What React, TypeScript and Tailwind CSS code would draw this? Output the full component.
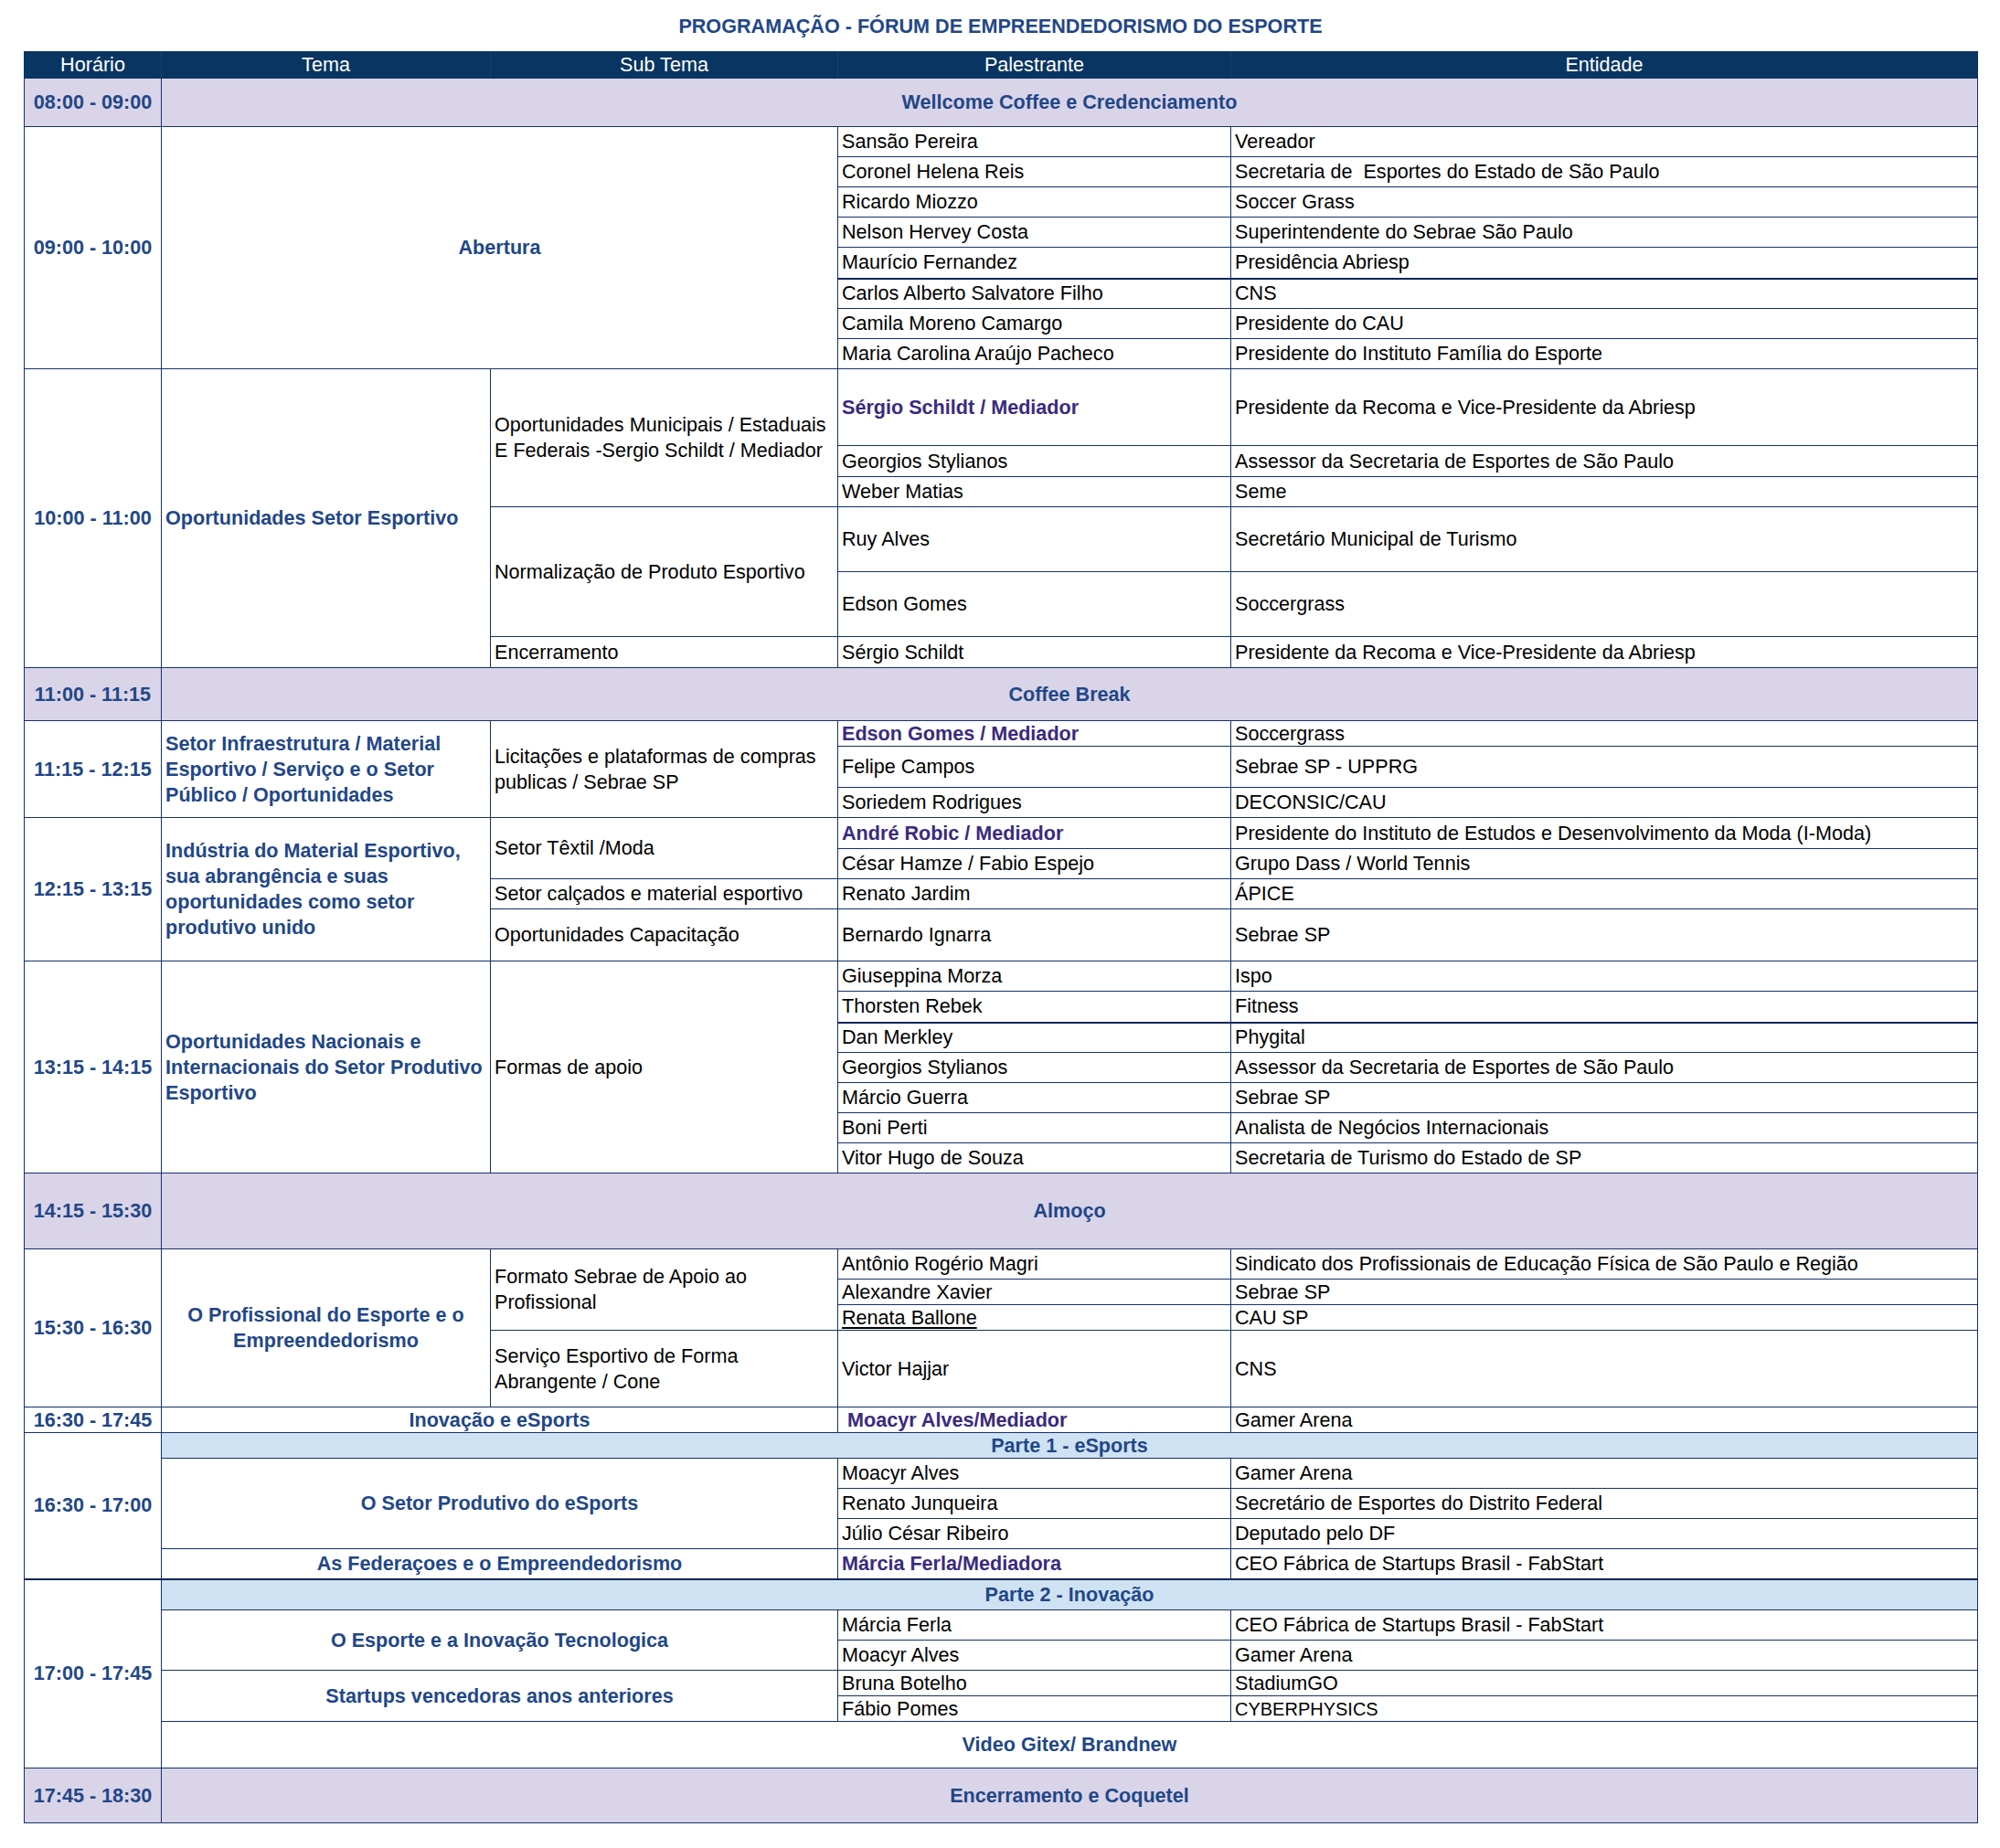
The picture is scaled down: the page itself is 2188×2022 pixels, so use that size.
import React from 'react';

// Célula base da planilha
const td = 'border border-[#14306b] px-[4px] py-0 align-middle whitespace-nowrap overflow-hidden';
const blue = 'font-bold text-[#1f4788]';
const purple = 'font-bold text-[#3a2a7e]';
const lav = 'bg-[#dad4e9]';
const sky = 'bg-[#cfe2f3]';
const thick = 'border-b-2 border-b-[#0a2458]';
const multi = 'leading-[28px]';

type Pair = [string, string];

const SpeakerCells = ({ p, extra = '' }: { p: Pair; extra?: string }) => (
  <>
    <td className={`${td} ${extra}`}>{p[0]}</td>
    <td className={`${td} ${extra}`}>{p[1]}</td>
  </>
);

const App = () => {
  return (
    <div className="min-h-[2022px] bg-white pl-[26px] font-['Liberation_Sans',Arial,sans-serif] text-black">
      <div className={`flex h-[56px] w-[2137px] items-center justify-center pt-[2px] text-[21.6px] ${blue}`}>
        PROGRAMAÇÃO - FÓRUM DE EMPREENDEDORISMO DO ESPORTE
      </div>

      <table className="w-[2137px] table-fixed border-collapse text-[21.6px] leading-[26px]">
        <colgroup>
          <col className="w-[150px]" />
          <col className="w-[360px]" />
          <col className="w-[380px]" />
          <col className="w-[430px]" />
          <col className="w-[817px]" />
        </colgroup>
        <tbody>
          <tr className="h-[29px] bg-[#093563] text-white">
            <td className={`${td} border-[#093563] border-r-[#1d3d6b] text-center`}>Horário</td>
            <td className={`${td} border-[#093563] border-r-[#1d3d6b] text-center`}>Tema</td>
            <td className={`${td} border-[#093563] border-r-[#1d3d6b] text-center`}>Sub Tema</td>
            <td className={`${td} border-[#093563] border-r-[#1d3d6b] text-center`}>Palestrante</td>
            <td className={`${td} border-[#093563] text-center`}>Entidade</td>
          </tr>

          <tr className={`h-[53px] ${lav}`}>
            <td className={`${td} ${blue} text-center`}>08:00 - 09:00</td>
            <td colSpan={4} className={`${td} ${blue} text-center`}>Wellcome Coffee e Credenciamento</td>
          </tr>

          {/* Abertura */}
          <tr className="h-[33px]">
            <td rowSpan={8} className={`${td} ${blue} text-center`}>09:00 - 10:00</td>
            <td rowSpan={8} colSpan={2} className={`${td} ${blue} text-center`}>Abertura</td>
            <SpeakerCells p={['Sansão Pereira', 'Vereador']} />
          </tr>
          <tr className="h-[33px]">
            <SpeakerCells p={['Coronel Helena Reis', 'Secretaria de\u00a0 Esportes do Estado de São Paulo']} />
          </tr>
          <tr className="h-[33px]">
            <SpeakerCells p={['Ricardo Miozzo', 'Soccer Grass']} />
          </tr>
          <tr className="h-[33px]">
            <SpeakerCells p={['Nelson Hervey Costa', 'Superintendente do Sebrae São Paulo']} />
          </tr>
          <tr className="h-[34px]">
            <SpeakerCells p={['Maurício Fernandez', 'Presidência Abriesp']} extra={thick} />
          </tr>
          <tr className="h-[33px]">
            <SpeakerCells p={['Carlos Alberto Salvatore Filho', 'CNS']} />
          </tr>
          <tr className="h-[33px]">
            <SpeakerCells p={['Camila Moreno Camargo', 'Presidente do CAU']} />
          </tr>
          <tr className="h-[33px]">
            <SpeakerCells p={['Maria Carolina Araújo Pacheco', 'Presidente do Instituto Família do Esporte']} />
          </tr>

          {/* 10:00 - 11:00 */}
          <tr className="h-[84px]">
            <td rowSpan={6} className={`${td} ${blue} text-center`}>10:00 - 11:00</td>
            <td rowSpan={6} className={`${td} ${blue}`}>Oportunidades Setor Esportivo</td>
            <td rowSpan={3} className={`${td} ${multi}`}>
              Oportunidades Municipais / Estaduais
              <br />
              E Federais -Sergio Schildt / Mediador
            </td>
            <td className={`${td} ${purple}`}>Sérgio Schildt / Mediador</td>
            <td className={td}>Presidente da Recoma e Vice-Presidente da Abriesp</td>
          </tr>
          <tr className="h-[34px]">
            <SpeakerCells p={['Georgios Stylianos', 'Assessor da Secretaria de Esportes de São Paulo']} />
          </tr>
          <tr className="h-[33px]">
            <SpeakerCells p={['Weber Matias', 'Seme']} />
          </tr>
          <tr className="h-[71px]">
            <td rowSpan={2} className={td}>Normalização de Produto Esportivo</td>
            <SpeakerCells p={['Ruy Alves', 'Secretário Municipal de Turismo']} />
          </tr>
          <tr className="h-[71px]">
            <SpeakerCells p={['Edson Gomes', 'Soccergrass']} />
          </tr>
          <tr className="h-[34px]">
            <td className={td}>Encerramento</td>
            <SpeakerCells p={['Sérgio Schildt', 'Presidente da Recoma e Vice-Presidente da Abriesp']} />
          </tr>

          <tr className={`h-[58px] ${lav}`}>
            <td className={`${td} ${blue} text-center`}>11:00 - 11:15</td>
            <td colSpan={4} className={`${td} ${blue} text-center`}>Coffee Break</td>
          </tr>

          {/* 11:15 - 12:15 */}
          <tr className="h-[28px]">
            <td rowSpan={3} className={`${td} ${blue} text-center`}>11:15 - 12:15</td>
            <td rowSpan={3} className={`${td} ${blue} ${multi}`}>
              Setor Infraestrutura / Material
              <br />
              Esportivo / Serviço e o Setor
              <br />
              Público / Oportunidades
            </td>
            <td rowSpan={3} className={`${td} ${multi}`}>
              Licitações e plataformas de compras
              <br />
              publicas / Sebrae SP
            </td>
            <td className={`${td} ${purple}`}>Edson Gomes / Mediador</td>
            <td className={td}>Soccergrass</td>
          </tr>
          <tr className="h-[45px]">
            <SpeakerCells p={['Felipe Campos', 'Sebrae SP - UPPRG']} />
          </tr>
          <tr className="h-[33px]">
            <SpeakerCells p={['Soriedem Rodrigues', 'DECONSIC/CAU']} />
          </tr>

          {/* 12:15 - 13:15 */}
          <tr className="h-[34px]">
            <td rowSpan={4} className={`${td} ${blue} text-center`}>12:15 - 13:15</td>
            <td rowSpan={4} className={`${td} ${blue} ${multi}`}>
              Indústria do Material Esportivo,
              <br />
              sua abrangência e suas
              <br />
              oportunidades como setor
              <br />
              produtivo unido
            </td>
            <td rowSpan={2} className={td}>Setor Têxtil /Moda</td>
            <td className={`${td} ${purple}`}>André Robic / Mediador</td>
            <td className={td}>Presidente do Instituto de Estudos e Desenvolvimento da Moda (I-Moda)</td>
          </tr>
          <tr className="h-[33px]">
            <SpeakerCells p={['César Hamze / Fabio Espejo', 'Grupo Dass / World Tennis']} />
          </tr>
          <tr className="h-[33px]">
            <td className={td}>Setor calçados e material esportivo</td>
            <SpeakerCells p={['Renato Jardim', 'ÁPICE']} />
          </tr>
          <tr className="h-[57px]">
            <td className={td}>Oportunidades Capacitação</td>
            <SpeakerCells p={['Bernardo Ignarra', 'Sebrae SP']} />
          </tr>

          {/* 13:15 - 14:15 */}
          <tr className="h-[33px]">
            <td rowSpan={7} className={`${td} ${blue} text-center`}>13:15 - 14:15</td>
            <td rowSpan={7} className={`${td} ${blue} ${multi}`}>
              Oportunidades Nacionais e
              <br />
              Internacionais do Setor Produtivo
              <br />
              Esportivo
            </td>
            <td rowSpan={7} className={td}>Formas de apoio</td>
            <SpeakerCells p={['Giuseppina Morza', 'Ispo']} />
          </tr>
          <tr className="h-[34px]">
            <SpeakerCells p={['Thorsten Rebek', 'Fitness']} extra={thick} />
          </tr>
          <tr className="h-[33px]">
            <SpeakerCells p={['Dan Merkley', 'Phygital']} />
          </tr>
          <tr className="h-[33px]">
            <SpeakerCells p={['Georgios Stylianos', 'Assessor da Secretaria de Esportes de São Paulo']} />
          </tr>
          <tr className="h-[33px]">
            <SpeakerCells p={['Márcio Guerra', 'Sebrae SP']} />
          </tr>
          <tr className="h-[33px]">
            <SpeakerCells p={['Boni Perti', 'Analista de Negócios Internacionais']} />
          </tr>
          <tr className="h-[33px]">
            <SpeakerCells p={['Vitor Hugo de Souza', 'Secretaria de Turismo do Estado de SP']} />
          </tr>

          <tr className={`h-[83px] ${lav}`}>
            <td className={`${td} ${blue} text-center`}>14:15 - 15:30</td>
            <td colSpan={4} className={`${td} ${blue} text-center`}>Almoço</td>
          </tr>

          {/* 15:30 - 16:30 */}
          <tr className="h-[33px]">
            <td rowSpan={4} className={`${td} ${blue} text-center`}>15:30 - 16:30</td>
            <td rowSpan={4} className={`${td} ${blue} ${multi} text-center`}>
              O Profissional do Esporte e o
              <br />
              Empreendedorismo
            </td>
            <td rowSpan={3} className={`${td} ${multi}`}>
              Formato Sebrae de Apoio ao
              <br />
              Profissional
            </td>
            <SpeakerCells p={['Antônio Rogério Magri', 'Sindicato dos Profissionais de Educação Física de São Paulo e Região']} />
          </tr>
          <tr className="h-[28px]">
            <SpeakerCells p={['Alexandre Xavier', 'Sebrae SP']} />
          </tr>
          <tr className="h-[28px]">
            <td className={td}>
              <span className="underline decoration-[1.5px] underline-offset-[3px]">Renata Ballone</span>
            </td>
            <td className={td}>CAU SP</td>
          </tr>
          <tr className="h-[84px]">
            <td className={`${td} ${multi}`}>
              Serviço Esportivo de Forma
              <br />
              Abrangente / Cone
            </td>
            <SpeakerCells p={['Victor Hajjar', 'CNS']} />
          </tr>

          <tr className="h-[28px]">
            <td className={`${td} ${blue} text-center`}>16:30 - 17:45</td>
            <td colSpan={2} className={`${td} ${blue} text-center`}>Inovação e eSports</td>
            <td className={`${td} ${purple} pl-[10px]`}>Moacyr Alves/Mediador</td>
            <td className={td}>Gamer Arena</td>
          </tr>

          {/* 16:30 - 17:00 */}
          <tr className="h-[28px]">
            <td rowSpan={5} className={`${td} ${blue} ${thick} text-center`}>16:30 - 17:00</td>
            <td colSpan={4} className={`${td} ${blue} ${sky} text-center`}>Parte 1 - eSports</td>
          </tr>
          <tr className="h-[33px]">
            <td rowSpan={3} colSpan={2} className={`${td} ${blue} text-center`}>O Setor Produtivo do eSports</td>
            <SpeakerCells p={['Moacyr Alves', 'Gamer Arena']} />
          </tr>
          <tr className="h-[33px]">
            <SpeakerCells p={['Renato Junqueira', 'Secretário de Esportes do Distrito Federal']} />
          </tr>
          <tr className="h-[33px]">
            <SpeakerCells p={['Júlio César Ribeiro', 'Deputado pelo DF']} />
          </tr>
          <tr className="h-[33px]">
            <td colSpan={2} className={`${td} ${blue} ${thick} text-center`}>As Federaçoes e o Empreendedorismo</td>
            <td className={`${td} ${purple} ${thick}`}>Márcia Ferla/Mediadora</td>
            <td className={`${td} ${thick}`}>CEO Fábrica de Startups Brasil - FabStart</td>
          </tr>

          {/* 17:00 - 17:45 */}
          <tr className="h-[34px]">
            <td rowSpan={6} className={`${td} ${blue} text-center`}>17:00 - 17:45</td>
            <td colSpan={4} className={`${td} ${blue} ${sky} text-center`}>Parte 2 - Inovação</td>
          </tr>
          <tr className="h-[33px]">
            <td rowSpan={2} colSpan={2} className={`${td} ${blue} text-center`}>O Esporte e a Inovação Tecnologica</td>
            <SpeakerCells p={['Márcia Ferla', 'CEO Fábrica de Startups Brasil - FabStart']} />
          </tr>
          <tr className="h-[33px]">
            <SpeakerCells p={['Moacyr Alves', 'Gamer Arena']} />
          </tr>
          <tr className="h-[28px]">
            <td rowSpan={2} colSpan={2} className={`${td} ${blue} text-center`}>Startups vencedoras anos anteriores</td>
            <SpeakerCells p={['Bruna Botelho', 'StadiumGO']} />
          </tr>
          <tr className="h-[28px]">
            <td className={td}>Fábio Pomes</td>
            <td className={`${td} text-[20px]`}>CYBERPHYSICS</td>
          </tr>
          <tr className="h-[51px]">
            <td colSpan={4} className={`${td} ${blue} text-center`}>Video Gitex/ Brandnew</td>
          </tr>

          <tr className={`h-[60px] ${lav}`}>
            <td className={`${td} ${blue} text-center`}>17:45 - 18:30</td>
            <td colSpan={4} className={`${td} ${blue} text-center`}>Encerramento e Coquetel</td>
          </tr>
        </tbody>
      </table>
    </div>
  );
};

export default App;
